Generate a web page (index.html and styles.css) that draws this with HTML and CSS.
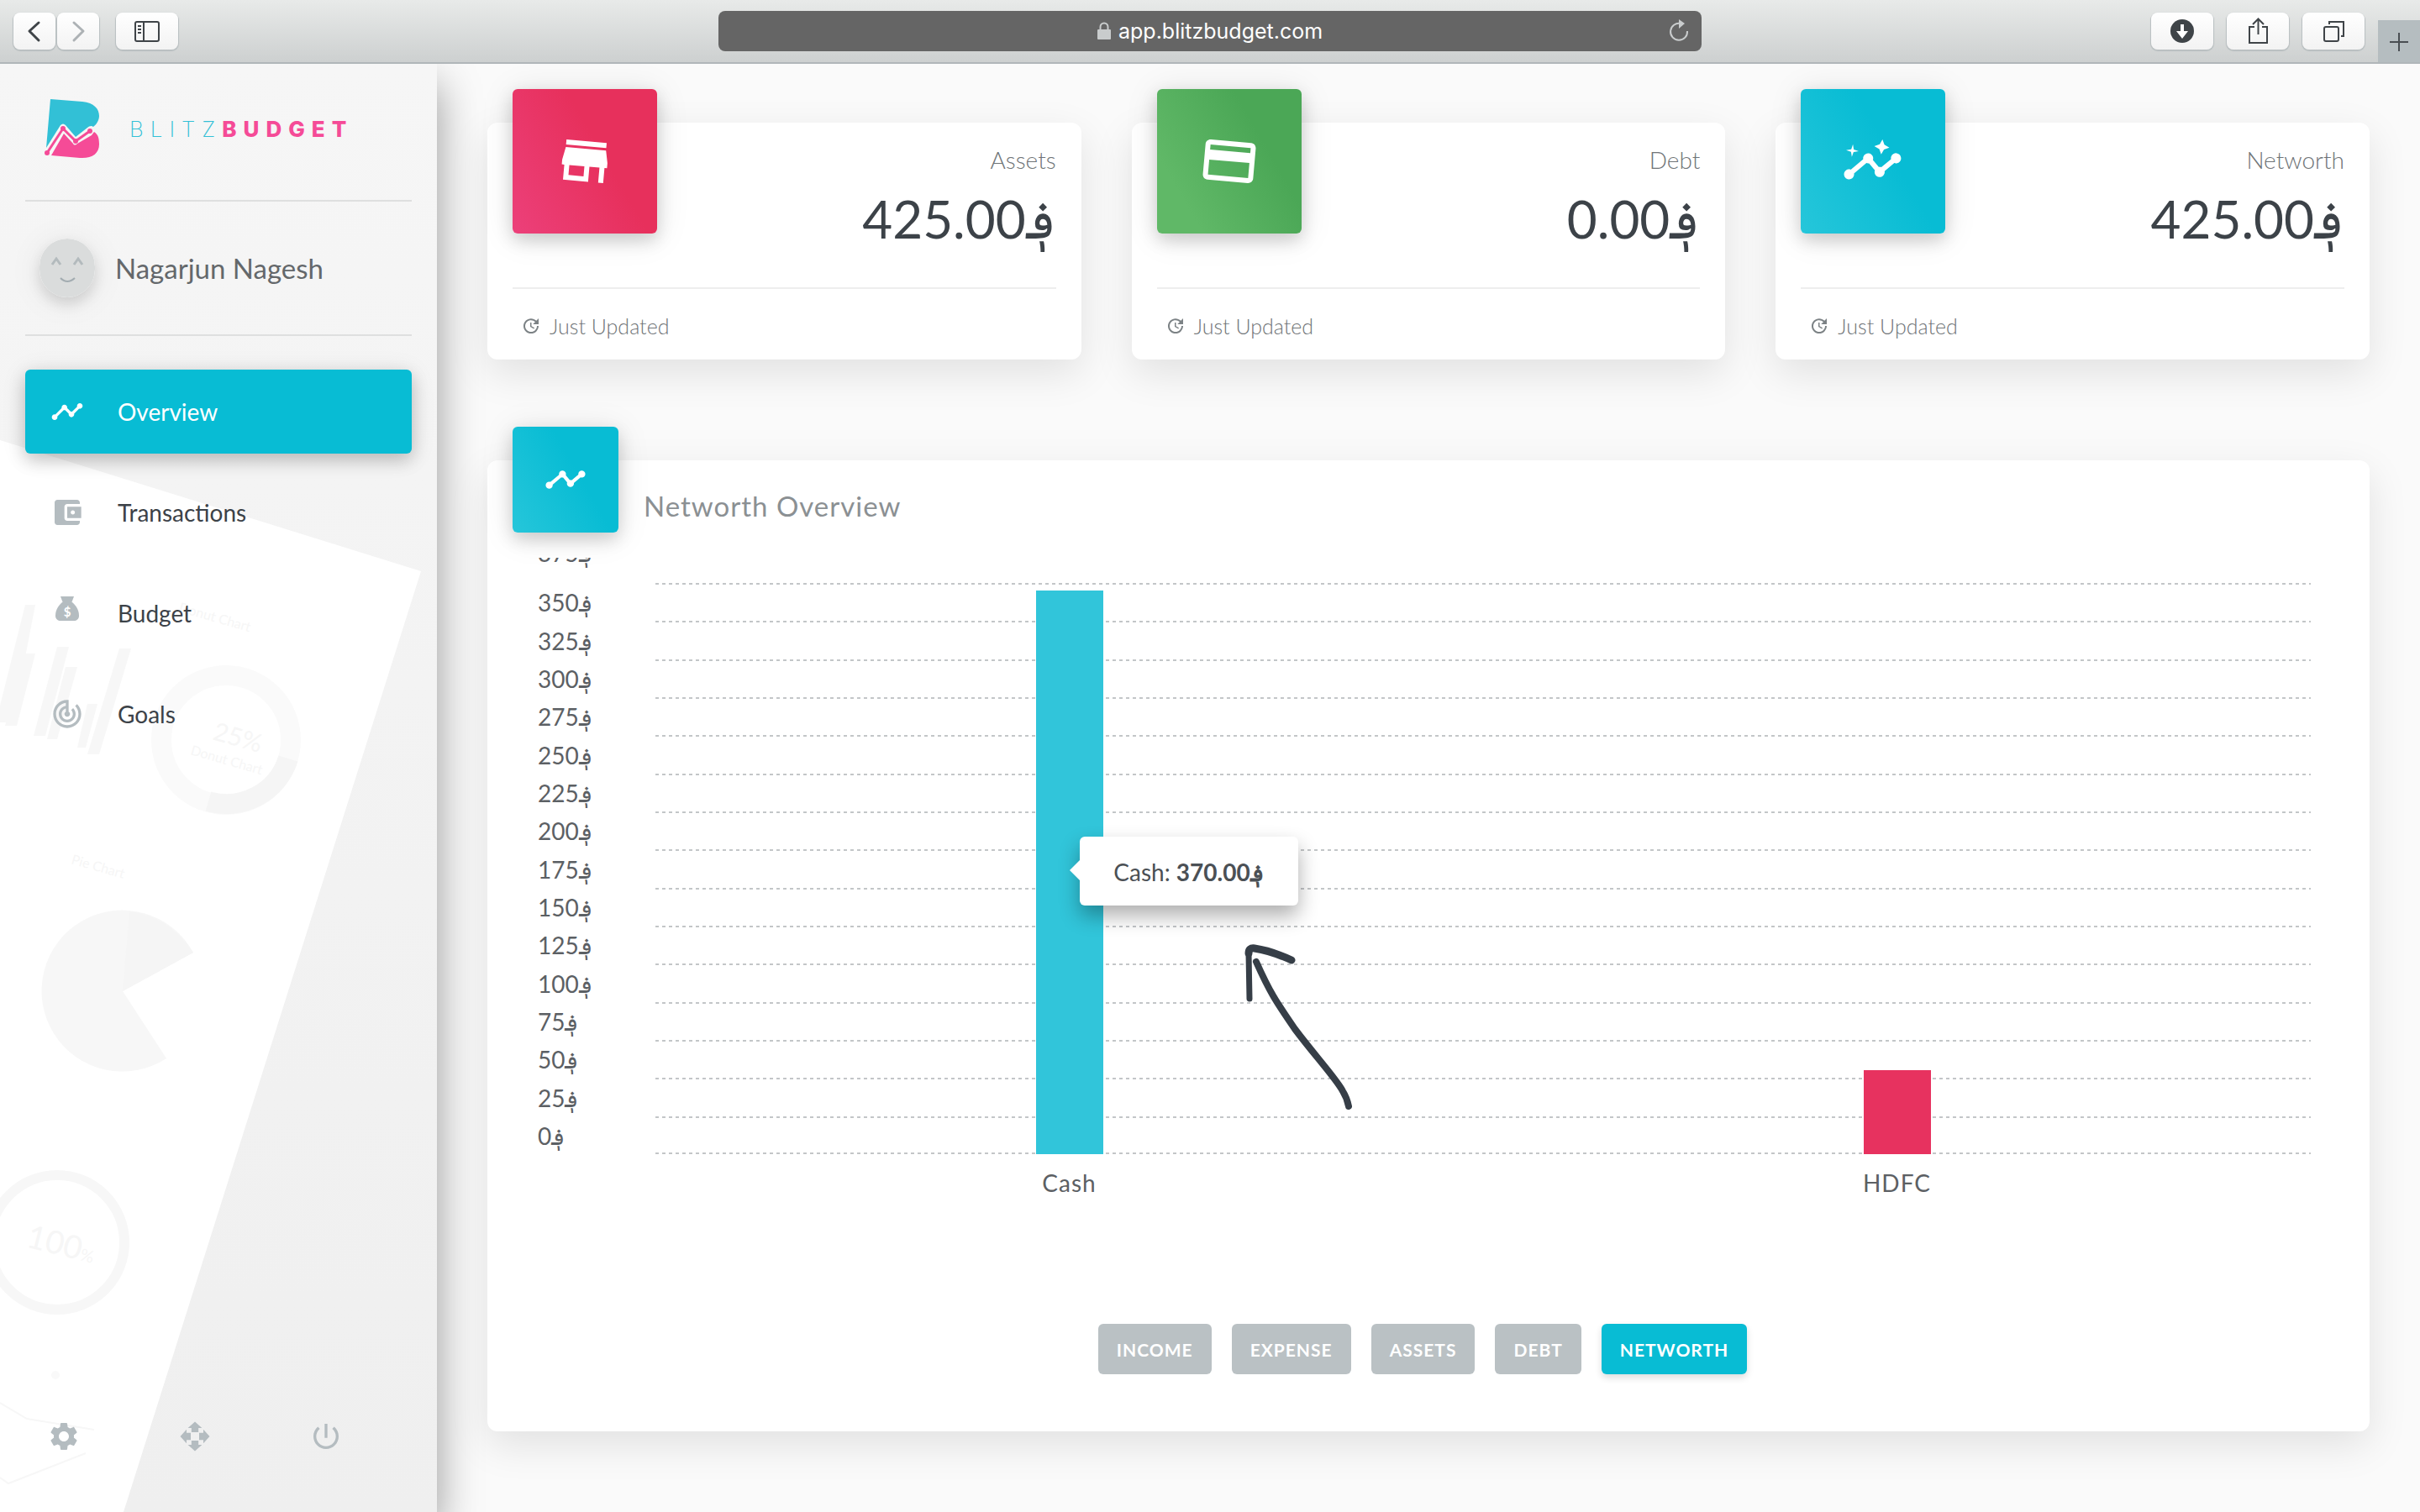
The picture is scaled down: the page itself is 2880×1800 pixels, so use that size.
FILE: index.html
```html
<!DOCTYPE html>
<html lang="en">
<head>
<meta charset="utf-8">
<title>BlitzBudget</title>
<link rel="stylesheet" href="styles.css">
</head>
<body>
<header class="browser">
  <div class="browser-left">
    <div class="pair">
      <button class="chrome-btn small" aria-label="Back"><svg width="50" height="44" viewBox="0 0 50 44" fill="none" stroke="#3f4448" stroke-width="3" stroke-linecap="round" stroke-linejoin="round"><path d="M30 12L19 22l11 11"/></svg></button>
      <button class="chrome-btn small" aria-label="Forward"><svg width="50" height="44" viewBox="0 0 50 44" fill="none" stroke="#adb2b5" stroke-width="3" stroke-linecap="round" stroke-linejoin="round"><path d="M20 12l11 10-11 11"/></svg></button>
    </div>
    <button class="chrome-btn" aria-label="Show sidebar"><svg width="74" height="44" viewBox="0 0 74 44" fill="none" stroke="#3f4448" stroke-width="2"><rect x="23" y="11" width="28" height="23" rx="2"/><path d="M33 11v23M26 16h4M26 20h4M26 24h4"/></svg></button>
  </div>
  <div class="address">
    <svg class="lock" width="18" height="22" viewBox="0 0 18 22"><rect x="1" y="9" width="16" height="12" rx="1" fill="#c9cccd"/><path d="M4.500 10V6a4.500 4.500 0 0 1 9 0v4" fill="none" stroke="#c9cccd" stroke-width="2"/></svg>
    <input class="url" type="text" aria-label="Address" value="app.blitzbudget.com">
    <button class="reload" aria-label="Reload"><svg width="26" height="28" viewBox="0 0 26 28" fill="none" stroke="#c9cccd" stroke-width="2"><path d="M15 5a10 10 0 1 0 8 9"/><path d="M13 0l7 5-7 6z" fill="#c9cccd" stroke="none"/></svg></button>
  </div>
  <div class="browser-right">
    <button class="chrome-btn" aria-label="Downloads"><svg width="74" height="44" viewBox="0 0 74 44"><circle cx="37" cy="22" r="14" fill="#3f4448"/><path d="M35 14h4v8h5l-7 9-7-9h5z" fill="#fff"/></svg></button>
    <button class="chrome-btn" aria-label="Share"><svg width="74" height="44" viewBox="0 0 74 44" fill="none" stroke="#3f4448" stroke-width="2"><path d="M33 17h-6v19h21V17h-6M37.500 26V8M31 14l6.500-6.500L44 14"/></svg></button>
    <button class="chrome-btn" aria-label="Tabs"><svg width="74" height="44" viewBox="0 0 74 44" fill="none" stroke="#3f4448" stroke-width="2"><rect x="26" y="17" width="17" height="17" rx="2"/><path d="M32 14v-3h17v17h-3"/></svg></button>
    <button class="new-tab" aria-label="New tab"><svg width="50" height="50" viewBox="0 0 50 50" stroke="#4a4f53" stroke-width="2"><path d="M14 26h22M25 15v22"/></svg></button>
  </div>
</header>
<div class="app">
  <aside class="sidebar">
    <svg class="paper" viewBox="0 76 520 1724" preserveAspectRatio="xMinYMin slice" aria-hidden="true">
      <path d="M0 524L501 680 147 1800H0z" fill="#fff"/>
      <g fill="#f7f7f7">
        <path d="M30 720h12L15 860H0v-20zM30 778h12l-22 86H6zM68 770h14L54 876H40zM78 794h14L68 880H56zM104 838h12l-14 52H92zM142 772h14l-38 126h-14z"/>
        <path d="M146 1180L230 1134A96 96 0 1 0 198 1260z"/>
      </g>
      <path d="M154 1085q46 5 76 49l-84 46z" fill="#f5f5f5"/>
      <circle cx="269" cy="881" r="77" fill="none" stroke="#fafafa" stroke-width="24"/>
      <path d="M343 903a77 77 0 0 1-95 51" fill="none" stroke="#f5f5f5" stroke-width="24"/>
      <circle cx="68" cy="1479" r="80" fill="none" stroke="#f7f7f7" stroke-width="12"/>
      <circle cx="66" cy="1637" r="5" fill="#f9f9f9"/>
      <path d="M0 1670l32 19 80 13M0 1759l10 7 92-36" fill="none" stroke="#f7f7f7" stroke-width="2"/>
      <g class="paper-text">
        <text transform="translate(252 880) rotate(16)" font-size="30">25%</text>
        <text transform="translate(226 898) rotate(16)" font-size="16">Donut Chart</text>
        <text transform="translate(212 728) rotate(16)" font-size="16">Donut Chart</text>
        <text transform="translate(84 1028) rotate(16)" font-size="16">Pie Chart</text>
        <text transform="translate(30 1484) rotate(14)" font-size="38">100<tspan font-size="20">%</tspan></text>
      </g>
    </svg>
    <a class="brand" href="#">
      <svg width="70" height="72" viewBox="0 0 70 72"><path d="M8 1L46 4C60 5 66 13 66 21c0 5-3 10-7 13-2-2-5-1-7 1L38 46 26 32c-2-2-4-2-6 0L3 59z" fill="#32c0d6"/><path d="M9 68L24 42l11 12c1 2 3 2 5 0l17-10 3-4c5 3 6 8 6 15 0 11-9 17-23 16z" fill="#f54b97"/><path d="M4 65L23 36l15 15 17-12" fill="none" stroke="#f54b97" stroke-width="3"/><g fill="#f54b97"><circle cx="4" cy="65" r="3"/><circle cx="23" cy="36" r="3"/><circle cx="38" cy="51" r="3"/><circle cx="55" cy="39" r="3"/></g></svg>
      <span class="brand-name"><span class="brand-thin">BLITZ</span><span class="brand-bold">BUDGET</span></span>
    </a>
    <div class="profile">
      <svg class="avatar" width="66" height="70" viewBox="0 0 66 70" fill="none" stroke="#b3babd" stroke-width="3"><rect width="66" height="70" rx="33" fill="#dadcdc" stroke="none"/><path d="M15 31l5-7 5 7M41 31l5-7 5 7" stroke-width="3"/><path d="M25 47q8 8 17 0" stroke="#a3acb1" stroke-width="2"/></svg>
      <span>Nagarjun Nagesh</span>
    </div>
    <nav class="menu">
      <a class="menu-item active" href="#"><svg class="icon" viewBox="0 0 24 24"><path d="M23 8c0 1.100-.9 2-2 2-.18 0-.35-.02-.51-.07l-3.560 3.550c.05.160.07.340.07.520 0 1.100-.9 2-2 2s-2-.9-2-2c0-.18.020-.36.070-.52l-2.550-2.550c-.16.050-.34.070-.52.070s-.36-.02-.52-.07l-4.550 4.560c.05.160.07.330.07.510 0 1.100-.9 2-2 2s-2-.9-2-2 .9-2 2-2c.18 0 .35.020.51.070l4.560-4.550C8.020 9.360 8 9.180 8 9c0-1.100.9-2 2-2s2 .9 2 2c0 .18-.02.360-.07.520l2.550 2.550c.16-.05.340-.07.520-.07s.36.020.52.070l3.550-3.560C19.020 8.350 19 8.180 19 8c0-1.100.9-2 2-2s2 .9 2 2z"/></svg>Overview</a>
      <a class="menu-item" href="#"><svg class="icon" viewBox="0 0 24 24"><path d="M21 18v1c0 1.100-.9 2-2 2H5c-1.110 0-2-.9-2-2V5c0-1.100.89-2 2-2h14c1.100 0 2 .9 2 2v1h-9c-1.110 0-2 .9-2 2v8c0 1.100.89 2 2 2h9zm-9-2h10V8H12v8zm4-2.500c-.83 0-1.500-.67-1.500-1.500s.67-1.500 1.500-1.500 1.500.67 1.500 1.500-.67 1.500-1.500 1.500z"/></svg>Transactions</a>
      <a class="menu-item" href="#"><svg class="icon" viewBox="0 0 40 40"><path d="M12 0h16l-3 8H15z"/><path d="M14 7h12c6 5 8 11 8 16 0 4-3 6-6 6H12c-3 0-6-2-6-6 0-5 2-11 8-16z"/><text x="20" y="24" font-size="15" font-weight="700" text-anchor="middle" fill="#fff">$</text></svg>Budget</a>
      <a class="menu-item" href="#"><svg class="icon" viewBox="0 0 24 24"><path d="M19.070 4.930l-1.410 1.410C19.100 7.790 20 9.790 20 12c0 4.420-3.580 8-8 8s-8-3.580-8-8c0-4.080 3.050-7.440 7-7.930v2.020C8.160 6.570 6 9.030 6 12c0 3.310 2.690 6 6 6s6-2.690 6-6c0-1.660-.67-3.160-1.760-4.240l-1.410 1.410C15.550 9.900 16 10.900 16 12c0 2.210-1.790 4-4 4s-4-1.790-4-4c0-1.860 1.280-3.410 3-3.860v2.140c-.6.350-1 .98-1 1.720 0 1.100.9 2 2 2s2-.9 2-2c0-.74-.4-1.380-1-1.720V2h-1C6.480 2 2 6.480 2 12s4.480 10 10 10 10-4.480 10-10c0-2.760-1.120-5.260-2.930-7.070z"/></svg>Goals</a>
    </nav>
    <div class="tools">
      <button class="tool" aria-label="Settings"><svg class="icon" viewBox="0 0 24 24"><path d="M19.140 12.940c.04-.3.060-.61.060-.94 0-.32-.02-.64-.07-.94l2.030-1.580c.18-.14.230-.41.120-.61l-1.920-3.320c-.12-.22-.37-.29-.59-.22l-2.390.96c-.5-.38-1.030-.7-1.620-.94l-.36-2.540c-.04-.24-.24-.41-.48-.41h-3.840c-.24 0-.43.170-.47.410l-.36 2.540c-.59.240-1.130.57-1.620.94l-2.390-.96c-.22-.08-.47 0-.59.220L2.740 8.870c-.12.210-.08.470.12.610l2.030 1.580c-.05.300-.09.630-.09.940s.02.640.07.940l-2.030 1.580c-.18.140-.23.410-.12.610l1.920 3.320c.12.220.37.290.59.220l2.390-.96c.5.380 1.030.7 1.620.94l.36 2.540c.05.240.24.410.48.410h3.840c.24 0 .44-.17.470-.41l.36-2.540c.59-.24 1.130-.56 1.620-.94l2.390.96c.22.080.47 0 .59-.22l1.920-3.320c.12-.22.070-.47-.12-.61l-2.010-1.580zM12 15.600c-1.980 0-3.600-1.620-3.600-3.600s1.620-3.600 3.600-3.600 3.600 1.620 3.600 3.600-1.620 3.600-3.600 3.600z"/></svg></button>
      <button class="tool" aria-label="Move"><svg class="icon" viewBox="0 0 24 24"><path d="M12 1.500l5 4.500H14.500v3h-5V6H7zM22.500 12L18 17V14.500h-3v-5h3V7zM12 22.500L7 18h2.500v-3h5v3H17zM1.500 12L6 7v2.500h3v5H6V17z"/></svg></button>
      <button class="tool" aria-label="Log out"><svg class="icon" viewBox="0 0 24 24"><path d="M13 3h-2v10h2V3zm4.830 2.170l-1.420 1.420C17.990 7.860 19 9.810 19 12c0 3.870-3.130 7-7 7s-7-3.130-7-7c0-2.190 1.010-4.140 2.580-5.420L6.170 5.170C4.230 6.820 3 9.260 3 12c0 4.970 4.030 9 9 9s9-4.030 9-9c0-2.740-1.230-5.180-3.170-6.830z"/></svg></button>
    </div>
  </aside>
  <main class="main">
    <section class="stats">
      <article class="card stat">
        <div class="stat-head">
          <div class="tile pink"><svg class="tile-icon" viewBox="0 0 24 24"><path d="M20 4H4v2h16V4zm1 10v-2l-1-5H4l-1 5v2h1v6h10v-6h4v6h2v-6h1zm-9 4H6v-4h6v4z"/></svg></div>
          <div class="stat-text"><p class="stat-label">Assets</p><p class="stat-value">425.00؋</p></div>
        </div>
        <p class="stat-foot"><svg class="mini" viewBox="0 0 24 24"><path d="M21 10.120h-6.780l2.740-2.820c-2.730-2.700-7.150-2.800-9.880-.1-2.730 2.710-2.730 7.080 0 9.790 2.730 2.710 7.150 2.710 9.880 0C18.320 15.650 19 14.080 19 12.100h2c0 1.980-.88 4.550-2.640 6.290-3.510 3.480-9.210 3.480-12.720 0-3.500-3.470-3.530-9.110-.02-12.580 3.510-3.470 9.140-3.470 12.650 0L21 3v7.120zM12.500 8v4.250l3.500 2.080-.72 1.210L11 13V8h1.500z"/></svg>Just Updated</p>
      </article>
      <article class="card stat">
        <div class="stat-head">
          <div class="tile green"><svg class="tile-icon" viewBox="0 0 24 24"><path d="M20 4H4c-1.110 0-1.990.89-1.990 2L2 18c0 1.110.89 2 2 2h16c1.110 0 2-.89 2-2V6c0-1.110-.89-2-2-2zm0 14H4v-6h16v6zm0-10H4V6h16v2z"/></svg></div>
          <div class="stat-text"><p class="stat-label">Debt</p><p class="stat-value">0.00؋</p></div>
        </div>
        <p class="stat-foot"><svg class="mini" viewBox="0 0 24 24"><path d="M21 10.120h-6.780l2.740-2.820c-2.730-2.700-7.150-2.800-9.880-.1-2.730 2.710-2.730 7.080 0 9.790 2.730 2.710 7.150 2.710 9.880 0C18.320 15.650 19 14.080 19 12.100h2c0 1.980-.88 4.550-2.640 6.290-3.510 3.480-9.210 3.480-12.720 0-3.500-3.470-3.530-9.110-.02-12.580 3.510-3.470 9.140-3.470 12.650 0L21 3v7.120zM12.500 8v4.250l3.500 2.080-.72 1.210L11 13V8h1.500z"/></svg>Just Updated</p>
      </article>
      <article class="card stat">
        <div class="stat-head">
          <div class="tile cyan"><svg class="tile-icon" viewBox="0 0 24 24"><path d="M21 8c-1.450 0-2.260 1.440-1.930 2.510l-3.550 3.560c-.3-.09-.74-.09-1.040 0l-2.550-2.550C12.270 10.450 11.460 9 10 9c-1.450 0-2.270 1.440-1.930 2.520l-4.560 4.550C2.440 15.740 1 16.550 1 18c0 1.100.9 2 2 2 1.450 0 2.260-1.440 1.930-2.510l4.550-4.560c.3.090.74.090 1.040 0l2.550 2.550C12.730 16.550 13.540 18 15 18c1.450 0 2.270-1.440 1.930-2.520l3.560-3.550C21.560 12.260 23 11.450 23 10c0-1.100-.9-2-2-2z"/><path d="M15 9l.94-2.070L18 6l-2.060-.93L15 3l-.92 2.070L12 6l2.080.93zM3.500 11L4 9l2-.5L4 8l-.5-2L3 8l-2 .5L3 9z"/></svg></div>
          <div class="stat-text"><p class="stat-label">Networth</p><p class="stat-value">425.00؋</p></div>
        </div>
        <p class="stat-foot"><svg class="mini" viewBox="0 0 24 24"><path d="M21 10.120h-6.780l2.740-2.820c-2.730-2.700-7.150-2.800-9.880-.1-2.730 2.710-2.730 7.080 0 9.790 2.730 2.710 7.150 2.710 9.880 0C18.320 15.650 19 14.080 19 12.100h2c0 1.980-.88 4.550-2.640 6.290-3.510 3.480-9.210 3.480-12.720 0-3.500-3.470-3.530-9.110-.02-12.580 3.510-3.470 9.140-3.470 12.650 0L21 3v7.120zM12.500 8v4.250l3.500 2.080-.72 1.210L11 13V8h1.500z"/></svg>Just Updated</p>
      </article>
    </section>
    <section class="card overview">
      <div class="overview-head">
        <div class="tile tile-small cyan"><svg class="tile-icon" viewBox="0 0 24 24"><path d="M23 8c0 1.100-.9 2-2 2-.18 0-.35-.02-.51-.07l-3.560 3.550c.05.160.07.340.07.520 0 1.100-.9 2-2 2s-2-.9-2-2c0-.18.020-.36.070-.52l-2.550-2.550c-.16.050-.34.070-.52.070s-.36-.02-.52-.07l-4.550 4.560c.05.160.07.330.07.510 0 1.100-.9 2-2 2s-2-.9-2-2 .9-2 2-2c.18 0 .35.020.51.070l4.560-4.550C8.020 9.360 8 9.180 8 9c0-1.100.9-2 2-2s2 .9 2 2c0 .18-.02.360-.07.520l2.550 2.550c.16-.05.340-.07.520-.07s.36.020.52.070l3.550-3.560C19.020 8.350 19 8.180 19 8c0-1.100.9-2 2-2s2 .9 2 2z"/></svg></div>
        <h2>Networth Overview</h2>
      </div>
      <div class="chart">
        <div class="y-axis">
          <span class="top-label">375؋</span><span>350؋</span><span>325؋</span><span>300؋</span><span>275؋</span><span>250؋</span><span>225؋</span><span>200؋</span><span>175؋</span><span>150؋</span><span>125؋</span><span>100؋</span><span>75؋</span><span>50؋</span><span>25؋</span><span>0؋</span>
        </div>
        <div class="plot">
          <div class="lines"><i></i><i></i><i></i><i></i><i></i><i></i><i></i><i></i><i></i><i></i><i></i><i></i><i></i><i></i><i></i></div>
          <div class="bars">
            <div class="bar cash" style="height:98.67%">
              <div class="tooltip">Cash: <b>370.00؋</b></div>
              <svg class="pointer" width="130" height="204" viewBox="0 0 130 204" fill="none" stroke="#363e47" stroke-linecap="round" stroke-linejoin="round"><path d="M8 66L7 12Q7 5 14 6" stroke-width="7"/><path d="M7 12Q7 5 14 6 34 9 58 20" stroke-width="9"/><path d="M16 22C32 58 40 70 62 102 86 134 112 162 119 176q5 8 7 18" stroke-width="8"/></svg>
            </div>
            <div class="bar hdfc" style="height:14.67%"></div>
          </div>
        </div>
        <div class="x-axis"><span>Cash</span><span>HDFC</span></div>
      </div>
      <div class="filters">
        <button class="filter">INCOME</button>
        <button class="filter">EXPENSE</button>
        <button class="filter">ASSETS</button>
        <button class="filter">DEBT</button>
        <button class="filter selected">NETWORTH</button>
      </div>
    </section>
  </main>
</div>
</body>
</html>
```
FILE: styles.css
```css
* { box-sizing: border-box; }
body {
  margin: 0;
  min-height: 100vh;
  display: flex;
  flex-direction: column;
  background: #fafafa;
  color: #3c4248;
  font-family: Lato, "DejaVu Sans", sans-serif;
  font-size: 28px;
}
button { border: 0; padding: 0; font: inherit; cursor: pointer; }
a { color: inherit; text-decoration: none; }
p, h2 { margin: 0; font-weight: 400; }
svg { display: block; flex: none; }

/* browser bar */
.browser {
  position: relative;
  z-index: 2;
  display: grid;
  grid-template-columns: 1fr minmax(0, 1170px) 1fr;
  align-items: center;
  height: 76px;
  background: linear-gradient(#e8eae9, #cdd0d0);
  border-bottom: 2px solid #b0b6b9;
}
.browser-left { display: flex; gap: 20px; padding-left: 16px; }
.pair { display: flex; gap: 2px; }
.chrome-btn {
  width: 74px;
  height: 44px;
  border-radius: 8px;
  background: linear-gradient(#fff, #f3f3f3);
  box-shadow: 0 1px 1px 1px #b9bfc1;
}
.chrome-btn.small { width: 50px; }
.address {
  display: flex;
  align-items: center;
  justify-content: center;
  gap: 8px;
  height: 48px;
  border-radius: 8px;
  background: #656565;
  position: relative;
}
.url {
  width: 244px;
  padding: 0;
  border: 0;
  background: none;
  color: #fff;
  font: 25px Inter, sans-serif;
}
.reload { position: absolute; right: 14px; background: none; }
.browser-right { align-self: stretch; display: flex; justify-content: flex-end; align-items: center; gap: 16px; }
.new-tab { align-self: flex-end; background: #b5bdc0; }

.app { flex: 1; display: flex; }

/* sidebar */
.sidebar {
  position: relative;
  z-index: 1;
  flex: 0 0 520px;
  display: flex;
  flex-direction: column;
  padding: 42px 30px 70px;
  background: linear-gradient(#f6f6f6, #efefef);
  box-shadow: 0 24px 48px rgba(0, 0, 0, .4);
}
.paper { position: absolute; inset: 0; width: 100%; height: 100%; z-index: -1; }
.paper-text { fill: #f6f6f6; }
.brand {
  display: flex;
  align-items: center;
  gap: 32px;
  height: 122px;
  padding: 0 22px 50px;
  border-bottom: 2px solid #dedfdf;
}
.brand-name { font: 26px Inter, sans-serif; letter-spacing: 8px; white-space: nowrap; }
.brand-thin { font-weight: 200; color: #32c0d6; }
.brand-bold { font-weight: 800; color: #f54b97; }
.profile {
  display: flex;
  align-items: center;
  gap: 24px;
  height: 160px;
  padding-left: 17px;
  border-bottom: 2px solid #dedfdf;
  font-size: 33px;
  color: #64686b;
}
.avatar { border-radius: 33px; box-shadow: 0 8px 16px rgba(0, 0, 0, .12), 0 4px 40px rgba(0, 0, 0, .08); }
.menu { display: flex; flex-direction: column; gap: 20px; padding-top: 40px; }
.menu-item {
  display: flex;
  align-items: center;
  gap: 40px;
  height: 100px;
  padding-left: 30px;
  border-radius: 6px;
}
.menu-item.active {
  background: #08bcd4;
  color: #fff;
  box-shadow: 0 8px 20px rgba(0, 0, 0, .18), 0 4px 30px rgba(0, 0, 0, .1);
}
.icon { width: 40px; height: 40px; fill: #b4bcc0; }
.active .icon { fill: #fff; }
.tools { display: flex; justify-content: space-between; margin-top: auto; padding: 0 82px 0 26px; }
.tool { background: none; }

/* content */
.main { flex: 1; min-width: 0; padding: 70px 60px 96px; }
.card {
  border-radius: 12px;
  background: #fff;
  box-shadow: 0 16px 48px rgba(0, 0, 0, .1);
}
.stats { display: grid; grid-template-columns: repeat(3, 1fr); gap: 60px; margin-bottom: 120px; }
.stat { padding: 0 30px; }
.stat-head {
  display: flex;
  justify-content: space-between;
  height: 198px;
  border-bottom: 2px solid #eee;
}
.tile {
  display: flex;
  align-items: center;
  justify-content: center;
  width: 172px;
  height: 172px;
  margin-top: -40px;
  border-radius: 6px;
  box-shadow: 0 8px 20px rgba(0, 0, 0, .16), 0 4px 40px rgba(0, 0, 0, .1);
}
.tile-small { width: 126px; height: 126px; }
.tile-icon { width: 72px; height: 72px; fill: #fff; transform: rotate(5deg); }
.tile-small .tile-icon { width: 50px; height: 50px; }
.pink { background: linear-gradient(60deg, #ec407a, #e7305c 60%); }
.green { background: linear-gradient(60deg, #60b867 20%, #4ba756 70%); }
.cyan { background: linear-gradient(60deg, #26c6da, #08bcd4 60%); }
.stat-text { padding-top: 26px; text-align: right; }
.stat-label { font-size: 28px; font-weight: 300; line-height: 36px; color: #6f7477; }
.stat-value { font-size: 62px; line-height: 104px; }
.stat-foot {
  display: flex;
  align-items: center;
  gap: 10px;
  height: 84px;
  padding: 4px 10px 0;
  font-size: 25px;
  font-weight: 300;
  line-height: 30px;
  color: #6f7477;
}
.mini { width: 24px; height: 24px; fill: #7c8285; }

.overview { padding: 0 30px 68px; }
.overview-head { display: flex; gap: 30px; height: 116px; }
.overview-head h2 { padding-top: 33px; font-size: 33px; line-height: 42px; letter-spacing: 1px; color: #8b9093; }
.chart { display: grid; grid-template-columns: 140px 1fr; padding: 0 40px 0 30px; color: #5c6064; letter-spacing: 1px; }
.y-axis { display: grid; grid-template-rows: 30px repeat(15, 1fr); height: 710px; overflow: hidden; line-height: 44px; }
.y-axis span { display: flex; flex-direction: column; justify-content: flex-end; }
.y-axis .top-label { padding-bottom: 14px; height: 30px; }
.plot { display: grid; margin-top: 30px; height: 680px; }
.lines, .bars { grid-area: 1 / 1; }
.lines {
  display: grid;
  grid-template-rows: repeat(15, 1fr);
  background: repeating-linear-gradient(90deg, #c3c6c8 0 4px, transparent 4px 8px) bottom / 100% 2px no-repeat;
}
.lines i { background: repeating-linear-gradient(90deg, #c3c6c8 0 4px, transparent 4px 8px) top / 100% 2px no-repeat; }
.bars { display: grid; grid-template-columns: 1fr 1fr; align-items: end; justify-items: center; height: 680px; }
.bar { position: relative; width: 80px; }
.cash { background: #31c5da; }
.hdfc { background: #e7325f; }
.x-axis { grid-column: 2; display: grid; grid-template-columns: 1fr 1fr; padding-top: 12px; line-height: 44px; text-align: center; }
.tooltip {
  position: absolute;
  left: 52px;
  top: 50%;
  width: 260px;
  height: 82px;
  margin-top: -43px;
  border-radius: 6px;
  background: #fff;
  box-shadow: 0 12px 24px rgba(0, 0, 0, .32);
  line-height: 84px;
  text-align: center;
  letter-spacing: 0;
  color: #4b5055;
}
.tooltip::before {
  content: "";
  position: absolute;
  left: -12px;
  top: 28px;
  border: 12px solid transparent;
  border-left: 0;
  border-right-color: #fff;
}
.pointer { position: absolute; left: 246px; top: 420px; }
.filters { display: flex; justify-content: center; gap: 24px; margin: 146px 14px 0 0; }
.filter {
  height: 60px;
  padding: 0 22px;
  border-radius: 6px;
  background: #bac1c4;
  color: #fff;
  font-size: 21px;
  font-weight: 700;
  letter-spacing: 1px;
}
.filter.selected { background: #08bcd4; box-shadow: 0 4px 8px rgba(0, 0, 0, .14); }
```
